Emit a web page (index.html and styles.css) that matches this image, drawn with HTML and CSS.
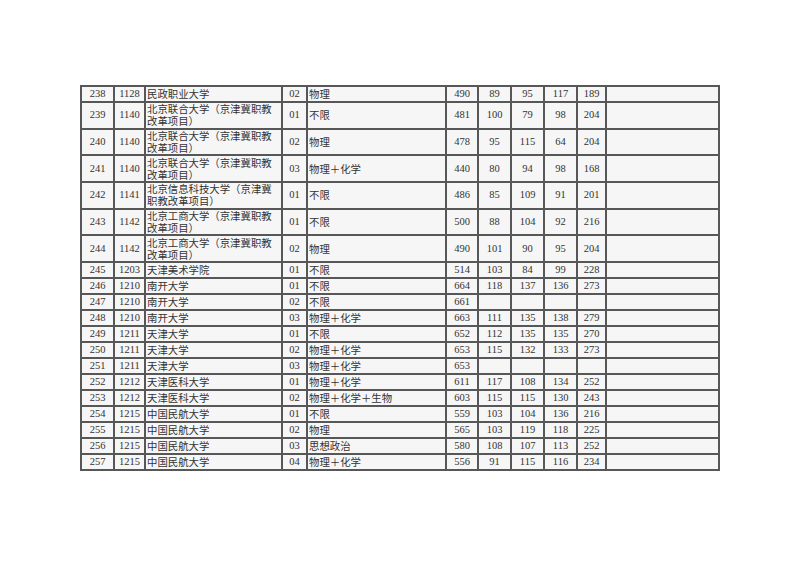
FILE: index.html
```html
<!DOCTYPE html>
<html lang="zh-CN">
<head>
<meta charset="utf-8">
<title>表</title>
<link rel="stylesheet" href="styles.css">
</head>
<body>
<div class="page">
<table class="grid">
<colgroup>
<col class="c1"><col class="c2"><col class="c3"><col class="c4"><col class="c5"><col class="c6"><col class="c7"><col class="c8"><col class="c9"><col class="c10"><col class="c11">
</colgroup>
<tbody>
<tr class="s"><td>238</td><td>1128</td><td class="l">民政职业大学</td><td>02</td><td class="l">物理</td><td>490</td><td>89</td><td>95</td><td>117</td><td>189</td><td></td></tr>
<tr class="d"><td>239</td><td>1140</td><td class="l">北京联合大学（京津冀职教<br>改革项目）</td><td>01</td><td class="l">不限</td><td>481</td><td>100</td><td>79</td><td>98</td><td>204</td><td></td></tr>
<tr class="d"><td>240</td><td>1140</td><td class="l">北京联合大学（京津冀职教<br>改革项目）</td><td>02</td><td class="l">物理</td><td>478</td><td>95</td><td>115</td><td>64</td><td>204</td><td></td></tr>
<tr class="d"><td>241</td><td>1140</td><td class="l">北京联合大学（京津冀职教<br>改革项目）</td><td>03</td><td class="l">物理＋化学</td><td>440</td><td>80</td><td>94</td><td>98</td><td>168</td><td></td></tr>
<tr class="d"><td>242</td><td>1141</td><td class="l">北京信息科技大学（京津冀<br>职教改革项目）</td><td>01</td><td class="l">不限</td><td>486</td><td>85</td><td>109</td><td>91</td><td>201</td><td></td></tr>
<tr class="d"><td>243</td><td>1142</td><td class="l">北京工商大学（京津冀职教<br>改革项目）</td><td>01</td><td class="l">不限</td><td>500</td><td>88</td><td>104</td><td>92</td><td>216</td><td></td></tr>
<tr class="d"><td>244</td><td>1142</td><td class="l">北京工商大学（京津冀职教<br>改革项目）</td><td>02</td><td class="l">物理</td><td>490</td><td>101</td><td>90</td><td>95</td><td>204</td><td></td></tr>
<tr class="s"><td>245</td><td>1203</td><td class="l">天津美术学院</td><td>01</td><td class="l">不限</td><td>514</td><td>103</td><td>84</td><td>99</td><td>228</td><td></td></tr>
<tr class="s"><td>246</td><td>1210</td><td class="l">南开大学</td><td>01</td><td class="l">不限</td><td>664</td><td>118</td><td>137</td><td>136</td><td>273</td><td></td></tr>
<tr class="s"><td>247</td><td>1210</td><td class="l">南开大学</td><td>02</td><td class="l">不限</td><td>661</td><td></td><td></td><td></td><td></td><td></td></tr>
<tr class="s"><td>248</td><td>1210</td><td class="l">南开大学</td><td>03</td><td class="l">物理＋化学</td><td>663</td><td>111</td><td>135</td><td>138</td><td>279</td><td></td></tr>
<tr class="s"><td>249</td><td>1211</td><td class="l">天津大学</td><td>01</td><td class="l">不限</td><td>652</td><td>112</td><td>135</td><td>135</td><td>270</td><td></td></tr>
<tr class="s"><td>250</td><td>1211</td><td class="l">天津大学</td><td>02</td><td class="l">物理＋化学</td><td>653</td><td>115</td><td>132</td><td>133</td><td>273</td><td></td></tr>
<tr class="s"><td>251</td><td>1211</td><td class="l">天津大学</td><td>03</td><td class="l">物理＋化学</td><td>653</td><td></td><td></td><td></td><td></td><td></td></tr>
<tr class="s"><td>252</td><td>1212</td><td class="l">天津医科大学</td><td>01</td><td class="l">物理＋化学</td><td>611</td><td>117</td><td>108</td><td>134</td><td>252</td><td></td></tr>
<tr class="s"><td>253</td><td>1212</td><td class="l">天津医科大学</td><td>02</td><td class="l">物理＋化学＋生物</td><td>603</td><td>115</td><td>115</td><td>130</td><td>243</td><td></td></tr>
<tr class="s"><td>254</td><td>1215</td><td class="l">中国民航大学</td><td>01</td><td class="l">不限</td><td>559</td><td>103</td><td>104</td><td>136</td><td>216</td><td></td></tr>
<tr class="s"><td>255</td><td>1215</td><td class="l">中国民航大学</td><td>02</td><td class="l">物理</td><td>565</td><td>103</td><td>119</td><td>118</td><td>225</td><td></td></tr>
<tr class="s"><td>256</td><td>1215</td><td class="l">中国民航大学</td><td>03</td><td class="l">思想政治</td><td>580</td><td>108</td><td>107</td><td>113</td><td>252</td><td></td></tr>
<tr class="s"><td>257</td><td>1215</td><td class="l">中国民航大学</td><td>04</td><td class="l">物理＋化学</td><td>556</td><td>91</td><td>115</td><td>116</td><td>234</td><td></td></tr>
</tbody>
</table>
</div>
</body>
</html>
```
FILE: styles.css
```css
html, body {
  margin: 0;
  padding: 0;
  background: #ffffff;
}
.page {
  width: 800px;
  height: 566px;
  padding: 85px 0 0 80px;
  box-sizing: border-box;
}
.grid {
  border-collapse: collapse;
  table-layout: fixed;
  width: 638px;
  font-family: "Liberation Serif", "Noto Sans CJK SC", serif;
  font-size: 10.5px;
  color: #333333;
  background: #f6f6f6;
}
.grid td {
  border: 2px solid #575757;
  padding: 0 1px;
  text-align: center;
  vertical-align: middle;
  line-height: 12px;
  white-space: nowrap;
  overflow: hidden;
}
.grid td.l {
  text-align: left;
  font-family: "Noto Sans CJK SC", sans-serif;
  font-size: 10.4px;
}
tr.s { height: 16px; }
tr.d { height: 26.67px; }
.c1 { width: 33px; }
.c2 { width: 31px; }
.c3 { width: 137px; }
.c4 { width: 25px; }
.c5 { width: 139px; }
.c6 { width: 32px; }
.c7 { width: 33px; }
.c8 { width: 33px; }
.c9 { width: 33px; }
.c10 { width: 29px; }
.c11 { width: 113px; }
```
